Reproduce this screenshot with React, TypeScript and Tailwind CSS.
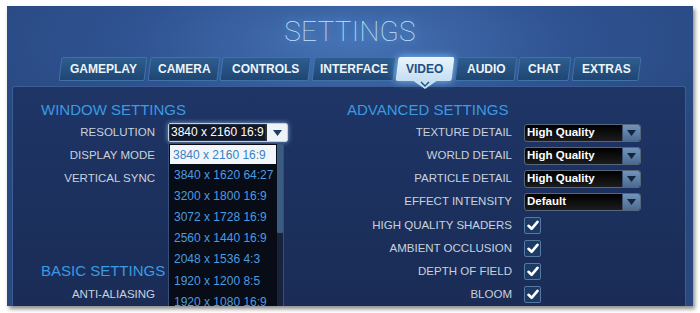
import React from "react";

const tabs: { name: string; w: number; active?: boolean }[] = [
  { name: "GAMEPLAY", w: 86 },
  { name: "CAMERA", w: 70 },
  { name: "CONTROLS", w: 89 },
  { name: "INTERFACE", w: 82 },
  { name: "VIDEO", w: 56, active: true },
  { name: "AUDIO", w: 60 },
  { name: "CHAT", w: 52 },
  { name: "EXTRAS", w: 67 },
];

const resolutions = [
  "3840 x 1620 64:27",
  "3200 x 1800 16:9",
  "3072 x 1728 16:9",
  "2560 x 1440 16:9",
  "2048 x 1536 4:3",
  "1920 x 1200 8:5",
  "1920 x 1080 16:9",
];

function Arrow({ color }: { color: string }) {
  return (
    <svg width="9" height="6" viewBox="0 0 9 6">
      <polygon points="0,0 9,0 4.5,6" fill={color} />
    </svg>
  );
}

function Label({ children, w }: { children: React.ReactNode; w: string }) {
  return (
    <div className={`${w} text-right text-[11.5px] text-[#c9d1dc] leading-none whitespace-nowrap`}>
      {children}
    </div>
  );
}

function Select({ value }: { value: string }) {
  return (
    <div className="flex h-[18px] w-[117px] rounded-[3px] border border-[#56677d] bg-[linear-gradient(180deg,#000000,#1c1c1e)] overflow-hidden">
      <div className="flex-1 flex items-center pl-[2px] text-[11.5px] font-bold text-white leading-none">
        {value}
      </div>
      <div className="w-[18px] flex items-center justify-center bg-[linear-gradient(180deg,#7294bb,#4b6a92)] border-l border-[#3b5172]">
        <Arrow color="#13243d" />
      </div>
    </div>
  );
}

function Check() {
  return (
    <div className="w-[17px] h-[17px] rounded-[2px] border border-[#5679a3] bg-[#1b3a66] flex items-center justify-center">
      <svg width="12" height="11" viewBox="0 0 12 11">
        <path d="M1.5 5.8 L4.6 8.8 L10.5 1.8" fill="none" stroke="#ffffff" strokeWidth="2.6" strokeLinecap="round" strokeLinejoin="round" />
      </svg>
    </div>
  );
}

function Row({ children }: { children: React.ReactNode }) {
  return <div className="h-[23.2px] shrink-0 flex items-center">{children}</div>;
}

export default function App() {
  const font = { fontFamily: '"Liberation Sans", Arial, sans-serif' };
  return (
    <div className="w-[700px] h-[313px] bg-white pt-[6px] pl-[7px]" style={font}>
      <div className="relative w-[686px] h-[300px] overflow-hidden flex flex-col bg-[radial-gradient(ellipse_60%_45%_at_50%_12%,#4673b5_0%,#2f5291_55%,#28487f_100%)] shadow-[2px_3px_4px_rgba(0,0,0,0.45)]">
        {/* Title */}
        <div className="h-[51px] shrink-0 flex items-center justify-center">
          <div
            className="text-[28px] leading-none font-thin text-[#c4e2f8] tracking-[0.3px] [text-shadow:0_0_8px_rgba(110,190,255,0.9)]"
            style={{ fontFamily: 'Roboto, "Noto Sans", sans-serif' }}
          >
            SETTINGS
          </div>
        </div>

        {/* Tabs */}
        <div className="h-[24px] shrink-0 flex justify-center gap-[2.5px]">
          {tabs.map((t) => (
            <div key={t.name} className="relative" style={{ width: t.w }}>
              <div
                className={
                  t.active
                    ? "h-full -skew-x-[7deg] rounded-[2px] bg-[linear-gradient(180deg,#eaf5fd,#c4def2)] shadow-[0_0_8px_rgba(140,205,255,0.9)] flex items-center justify-center"
                    : "h-full -skew-x-[7deg] rounded-[2px] border border-[#3f73a6] bg-[linear-gradient(180deg,#2d5d8f,#1f4673)] flex items-center justify-center"
                }
              >
                <span
                  className={
                    t.active
                      ? "skew-x-[7deg] text-[12px] font-bold text-[#1f4d82] leading-none"
                      : "skew-x-[7deg] text-[12px] font-bold text-[#eef4fa] leading-none"
                  }
                >
                  {t.name}
                </span>
              </div>
              {t.active && (
                <svg className="absolute left-1/2 -translate-x-1/2 top-[23px] z-10" width="26" height="10" viewBox="0 0 26 10">
                  <polygon points="0,0 26,0 13,9" fill="#c4def2" />
                  <path d="M9 2 L13 6 L17 2" fill="none" stroke="#1f4d82" strokeWidth="1.4" />
                </svg>
              )}
            </div>
          ))}
        </div>

        {/* Panel */}
        <div className="mt-[5px] ml-[5px] mr-[7px] flex-1 rounded-t-[3px] border border-b-0 border-[#3a5d93] bg-[linear-gradient(180deg,#1e3566,#1a2c56)] flex pt-[13px]">
          {/* Left column */}
          <div className="w-[334px] pl-[28px] flex flex-col">
            <div className="h-[18px] shrink-0 flex items-center text-[15px] text-[#3b9ae2] leading-none">WINDOW SETTINGS</div>
            <div className="mt-[3px] flex flex-col">
              <Row>
                <Label w="w-[114px]">RESOLUTION</Label>
                <div className="ml-[13px] flex h-[19px] w-[120px] rounded-[2px] border border-[#bcd0e4] shadow-[0_0_5px_rgba(170,210,250,0.7)] overflow-hidden">
                  <div className="flex-1 bg-[#26303f] flex items-center pl-[1px]">
                    <span className="bg-[#0f1728] text-white text-[12px] leading-[15px] px-[1px]">3840 x 2160 16:9</span>
                  </div>
                  <div className="w-[20px] bg-[#eef3f8] flex items-center justify-center">
                    <Arrow color="#1d3b63" />
                  </div>
                </div>
              </Row>
              <Row><Label w="w-[114px]">DISPLAY MODE</Label></Row>
              <Row><Label w="w-[114px]">VERTICAL SYNC</Label></Row>
              <Row><span /></Row>
              <Row><span /></Row>
            </div>
            <div className="mt-[25px] h-[18px] shrink-0 flex items-center text-[15px] text-[#3b9ae2] leading-none">BASIC SETTINGS</div>
            <div className="mt-[3px] flex flex-col">
              <Row><Label w="w-[114px]">ANTI-ALIASING</Label></Row>
            </div>
          </div>

          {/* Right column */}
          <div className="flex-1 flex flex-col">
            <div className="h-[18px] shrink-0 flex items-center text-[15px] text-[#3b9ae2] leading-none">ADVANCED SETTINGS</div>
            <div className="mt-[3px] flex flex-col">
              {[
                ["TEXTURE DETAIL", "High Quality"],
                ["WORLD DETAIL", "High Quality"],
                ["PARTICLE DETAIL", "High Quality"],
                ["EFFECT INTENSITY", "Default"],
              ].map(([l, v]) => (
                <Row key={l}>
                  <Label w="w-[165px]">{l}</Label>
                  <div className="ml-[12px]"><Select value={v} /></div>
                </Row>
              ))}
              {["HIGH QUALITY SHADERS", "AMBIENT OCCLUSION", "DEPTH OF FIELD", "BLOOM"].map((l) => (
                <Row key={l}>
                  <Label w="w-[165px]">{l}</Label>
                  <div className="ml-[12px]"><Check /></div>
                </Row>
              ))}
            </div>
          </div>
        </div>

        {/* Resolution dropdown list (overlay) */}
        <div className="absolute left-[161px] top-[137px] w-[116px] h-[170px] border border-[#34507a] bg-[#070c17] flex">
          <div className="flex-1 flex flex-col pt-[1px] pl-[1px]">
            <div className="h-[19px] shrink-0 mr-[1px] bg-[#f2f6fa] flex items-center pl-[3px] text-[12px] text-[#3a7fc2] leading-none">
              3840 x 2160 16:9
            </div>
            {resolutions.map((r) => (
              <div key={r} className="h-[21.2px] shrink-0 flex items-center pl-[4px] text-[12px] text-[#4a9ce0] leading-none whitespace-nowrap">
                {r}
              </div>
            ))}
          </div>
          <div className="w-[6px] bg-[#16233a] flex flex-col">
            <div className="h-[89px] bg-[#3c5b82] rounded-[1px]" />
          </div>
        </div>
      </div>
    </div>
  );
}
